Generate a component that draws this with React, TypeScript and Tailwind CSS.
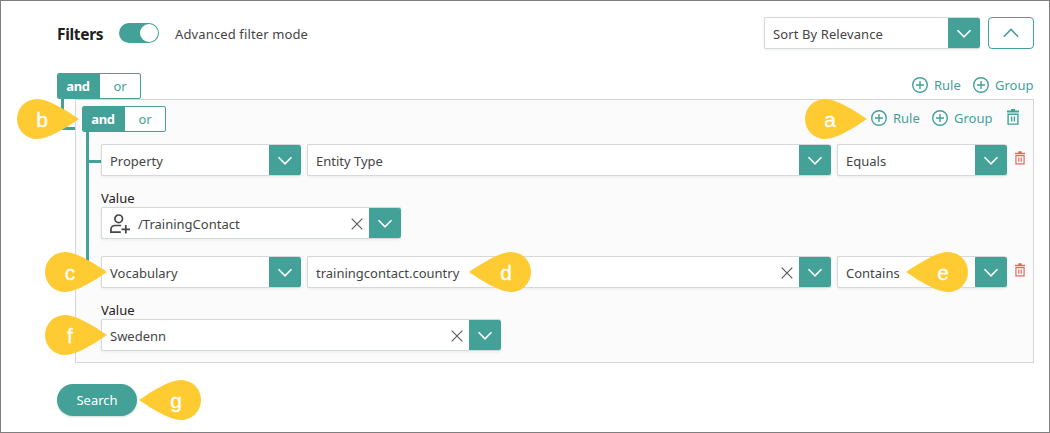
import React from "react";

const fontUi = "font-['Noto_Sans','Open_Sans',sans-serif]";

function Chevron({ up = false, className = "" }: { up?: boolean; className?: string }) {
  return (
    <svg width="16" height="10" viewBox="0 0 16 10" fill="none" stroke="currentColor" strokeWidth="1.6" className={className}>
      <path d={up ? "M.8 8.8 8 1.5 15.2 8.8" : "M1.5 1.2 8 7.8 14.5 1.2"} />
    </svg>
  );
}

function Cross() {
  return (
    <svg width="12" height="12" viewBox="0 0 12 12" fill="none" stroke="#555" strokeWidth="1.1" className="mt-0.5 mr-1.5 shrink-0">
      <path d="M.7.7 11.3 11.3M11.3.7.7 11.3" />
    </svg>
  );
}

function Select({ width, children, clear = false }: { width: string; children: React.ReactNode; clear?: boolean }) {
  return (
    <div className={`${width} flex h-8 shrink-0 items-center rounded-[2px] border border-r-0 border-[#d5d9d9] bg-white shadow-[0_1px_3px_rgba(0,80,70,0.08)]`}>
      <div className="flex min-w-0 flex-1 items-center pt-[3px] pl-2 whitespace-nowrap text-[#454545]">{children}</div>
      {clear && <Cross />}
      <div className="flex h-full w-8 items-center justify-center rounded-r-[2px] bg-[#43a198] pt-0.5 text-white">
        <Chevron />
      </div>
    </div>
  );
}

function AndOr() {
  return (
    <div className="flex h-[26px] w-[84px] shrink-0 overflow-hidden rounded-[2px] border border-[#43a198] bg-white text-[13px] leading-[25px] text-[#43a198]">
      <div className="w-[42px] bg-[#43a198] pr-0.5 text-center font-bold tracking-[-0.4px] text-white">and</div>
      <div className="flex-1 text-center">or</div>
    </div>
  );
}

function PlusCircle() {
  return (
    <svg width="16" height="16" viewBox="0 0 16 16" fill="none" stroke="currentColor" strokeWidth="1.4" className="shrink-0">
      <circle cx="8" cy="8" r="7.3" />
      <path d="M8 4v8M4 8h8" />
    </svg>
  );
}

function Actions() {
  return (
    <div className="flex h-6 items-center text-[#43a198]">
      <PlusCircle />
      <span className="ml-1.5 w-[39px] pt-0.5 whitespace-nowrap">Rule</span>
      <PlusCircle />
      <span className="ml-1.5 w-[39px] pt-0.5 whitespace-nowrap">Group</span>
    </div>
  );
}

function Trash({ className }: { className: string }) {
  return (
    <svg viewBox="0 0 12 16" fill="none" stroke="currentColor" className={className}>
      <path d="M0 2.5h12M4 .8h4" strokeWidth="1.8" />
      <path d="M1.1 5.2h9.8v9.9H1.1zM4.6 7.5v5M7.4 7.5v5" strokeWidth="1.4" />
    </svg>
  );
}

function UserPlus() {
  return (
    <svg width="20" height="20" viewBox="0 0 20 20" fill="none" stroke="#454545" strokeWidth="1.7" className="mr-2 mb-0.5">
      <circle cx="8.7" cy="4.8" r="3.8" />
      <path d="M10.8 18.2H.9v-2.5c0-2.5 1.800-4.200 4.200-4.200h6M15.800 11v8.500M11.500 15.300h8.500" />
    </svg>
  );
}

function Pin({ place, label, left = false }: { place: string; label: string; left?: boolean }) {
  return (
    <div className={`absolute h-10 w-[62px] ${place}`}>
      <svg width="62" height="40" viewBox="0 0 62 40" className={left ? "-scale-x-100" : ""}>
        <path fill="#ffcb33" d="M20 0C31 0 48 10.500 62 20 48 29.500 31 40 20 40A20 20 0 0 1 20 0Z" />
      </svg>
      <span className={`absolute top-0 w-[30px] text-center font-['Liberation_Sans',sans-serif] text-[21px] leading-[41px] text-white [-webkit-text-stroke:0.3px_white] ${left ? "left-[22px]" : "left-[10px]"}`}>
        {label}
      </span>
    </div>
  );
}

export default function App() {
  return (
    <div className={`relative flex h-[433px] w-[1050px] flex-col overflow-hidden border border-[#7f7f7f] bg-white pt-4 pr-[15px] pl-14 text-[13px] text-[#454545] ${fontUi}`}>
      <div className="flex h-8 items-center">
        <h1 className="w-[62px] pt-[3px] text-[15.5px] font-bold tracking-[-0.3px] text-[#212121]">Filters</h1>
        <div className="mb-px flex h-5 w-10 justify-end rounded-full bg-[#43a198] p-px">
          <div className="h-[18px] w-[18px] rounded-full bg-white" />
        </div>
        <span className="ml-4 flex-1 pt-[3px] tracking-[0.13px]">Advanced filter mode</span>
        <Select width="w-[216px]">
          <span className="tracking-[0.1px]">Sort By Relevance</span>
        </Select>
        <div className="ml-2 flex h-8 w-[46px] items-center justify-center rounded-[4px] border border-[#43a198] text-[#43a198]">
          <Chevron up />
        </div>
      </div>

      <div className="mt-6 flex h-[26px] justify-between">
        <AndOr />
        <Actions />
      </div>

      <div className="flex">
        <div className="ml-1 h-[31px] w-[14px] shrink-0 border-b-3 border-l-3 border-[#43a198]" />
        <div className="h-[264px] flex-1 border border-[#d6d6d6] bg-[#fbfbfb] pt-1.5 pl-1.5">
          <div className="flex h-[26px] justify-between">
            <AndOr />
            <div className="flex h-6 pr-3.5">
              <Actions />
              <Trash className="mt-[3px] ml-3.5 h-4 w-3 shrink-0 text-[#43a198]" />
            </div>
          </div>
          <div className="flex">
            <div className="ml-1 flex h-[142px] w-[15px] shrink-0 flex-col border-l-3 border-[#43a198] pt-7">
              <div className="h-[3px] bg-[#43a198]" />
            </div>
            <div className="flex flex-col pt-3">
              <div className="flex gap-1.5">
                <Select width="w-[200px]">Property</Select>
                <Select width="w-[524px]">Entity Type</Select>
                <Select width="w-[170px]">Equals</Select>
                <Trash className="mt-[7px] ml-0.5 h-3.5 w-2.5 text-[#e86461]" />
              </div>
              <div className="mt-3 h-[19px] leading-[20px] text-[#212121]">Value</div>
              <Select width="w-[300px]" clear>
                <UserPlus />
                /TrainingContact
              </Select>
              <div className="mt-[17px] flex gap-1.5">
                <Select width="w-[200px]">Vocabulary</Select>
                <Select width="w-[524px]" clear>trainingcontact.country</Select>
                <Select width="w-[170px]">Contains</Select>
                <Trash className="mt-[7px] ml-0.5 h-3.5 w-2.5 text-[#e86461]" />
              </div>
              <div className="mt-3 h-[19px] leading-[20px] text-[#212121]">Value</div>
              <Select width="w-[400px]" clear>Swedenn</Select>
            </div>
          </div>
        </div>
      </div>

      <button className="mt-[21px] h-8 w-20 shrink-0 rounded-full bg-[#43a198] pt-0.5 text-white shadow-[0_1px_2px_rgba(0,80,70,0.2)]">Search</button>

      <Pin label="a" place="left-[804px] top-[98px]" />
      <Pin label="b" place="left-[16px] top-[98px]" />
      <Pin label="c" place="left-[44px] top-[251px]" />
      <Pin label="d" place="left-[468px] top-[251px]" left />
      <Pin label="e" place="left-[905px] top-[251px]" left />
      <Pin label="f" place="left-[44px] top-[314px]" />
      <Pin label="g" place="left-[138px] top-[379px]" left />
    </div>
  );
}
